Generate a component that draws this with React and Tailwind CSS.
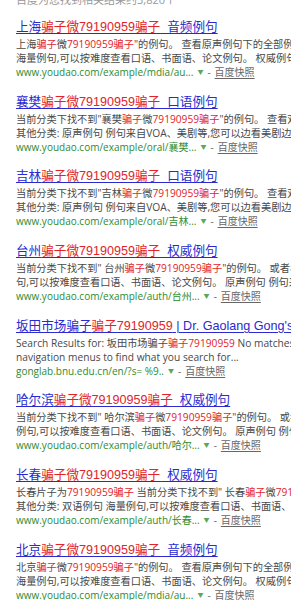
import React from "react";

const R = ({ children }) => <span className="text-[#e0242a]">{children}</span>;

const results = [
  {
    title: [["上海", 0], ["骗子微79190959骗子", 1], ["_音频例句", 0]],
    l1: [["上海", 0], ["骗子", 1], ["微", 0], ["79190959骗子", 1], ["\"的例句。 查看原声例句下的全部例句", 0]],
    l2: "海量例句,可以按难度查看口语、书面语、论文例句。 权威例句",
    url: "www.youdao.com/example/mdia/au...",
  },
  {
    title: [["襄樊", 0], ["骗子微79190959骗子", 1], ["_口语例句", 0]],
    l1: [["当前分类下找不到\"襄樊", 0], ["骗子", 1], ["微", 0], ["79190959骗子", 1], ["\"的例句。 查看双语例句", 0]],
    l2: "其他分类: 原声例句 例句来自VOA、美剧等,您可以边看美剧边学",
    url: "www.youdao.com/example/oral/襄樊...",
  },
  {
    title: [["吉林", 0], ["骗子微79190959骗子", 1], ["_口语例句", 0]],
    l1: [["当前分类下找不到\"吉林", 0], ["骗子", 1], ["微", 0], ["79190959骗子", 1], ["\"的例句。 查看双语例句", 0]],
    l2: "其他分类: 原声例句 例句来自VOA、美剧等,您可以边看美剧边学",
    url: "www.youdao.com/example/oral/吉林...",
  },
  {
    title: [["台州", 0], ["骗子微79190959骗子", 1], ["_权威例句", 0]],
    l1: [["当前分类下找不到\" 台州", 0], ["骗子", 1], ["微", 0], ["79190959骗子", 1], ["\"的例句。 或者看看", 0]],
    l2: "句,可以按难度查看口语、书面语、论文例句。 原声例句 例句来自",
    url: "www.youdao.com/example/auth/台州...",
  },
  {
    title: [["坂田市场骗子", 0], ["骗子79190959", 1], [" | Dr. Gaolang Gong's", 0]],
    l1: [["Search Results for: 坂田市场骗子", 0], ["骗子79190959", 1], [" No matches found", 0]],
    l2: "navigation menus to find what you search for...",
    url: "gonglab.bnu.edu.cn/en/?s= %9..",
  },
  {
    title: [["哈尔滨", 0], ["骗子微79190959骗子", 1], ["_权威例句", 0]],
    l1: [["当前分类下找不到\" 哈尔滨", 0], ["骗子", 1], ["微", 0], ["79190959骗子", 1], ["\"的例句。 或者看看", 0]],
    l2: "例句,可以按难度查看口语、书面语、论文例句。 原声例句 例句来自",
    url: "www.youdao.com/example/auth/哈尔...",
  },
  {
    title: [["长春", 0], ["骗子微79190959骗子", 1], ["_权威例句", 0]],
    l1: [["长春片子为", 0], ["79190959骗子", 1], [" 当前分类下找不到\" 长春", 0], ["骗子", 1], ["微", 0], ["79190959", 1]],
    l2: "其他分类: 双语例句 海量例句,可以按难度查看口语、书面语、论文",
    url: "www.youdao.com/example/auth/长春...",
  },
  {
    title: [["北京", 0], ["骗子微79190959骗子", 1], ["_音频例句", 0]],
    l1: [["北京", 0], ["骗子", 1], ["微", 0], ["79190959骗子", 1], ["\"的例句。 查看原声例句下的全部例句", 0]],
    l2: "海量例句,可以按难度查看口语、书面语、论文例句。 权威例句",
    url: "www.youdao.com/example/mdia/au...",
  },
];

function Result({ r }) {
  return (
    <div className="flex flex-col">
      <div
        className="h-[19px] leading-[19px] text-[12.6px] whitespace-nowrap overflow-hidden"
        style={{ fontFamily: '"Liberation Sans", "Noto Sans CJK SC", sans-serif' }}
      >
        <a className="underline decoration-1 underline-offset-[2px] text-[#2a2ad0]">
          {r.title.map(([t, red], i) =>
            red ? <R key={i}>{t}</R> : <span key={i}>{t}</span>
          )}
        </a>
      </div>
      <div className="h-[14px] leading-[14px] text-[10.2px] text-[#484848] whitespace-nowrap overflow-hidden">
        {r.l1.map(([t, red], i) => (red ? <R key={i}>{t}</R> : <span key={i}>{t}</span>))}
      </div>
      <div className="h-[14px] leading-[14px] text-[10.2px] text-[#484848] whitespace-nowrap overflow-hidden">
        {r.l2}
      </div>
      <div className="h-[14px] leading-[14px] text-[10px] whitespace-nowrap overflow-hidden flex items-center">
        <span className="text-[#2e8b2e]">{r.url}</span>
        <span className="text-[#5aa85a] text-[6px] ml-[4px]">▼</span>
        <span className="text-[#666] ml-[4px]">-</span>
        <span className="text-[#666] ml-[4px] underline underline-offset-[2px]">百度快照</span>
      </div>
    </div>
  );
}

export default function App() {
  return (
    <div
      className="w-[291px] h-[600px] overflow-hidden bg-white pl-[16px]"
      style={{ fontFamily: '"Open Sans", "Noto Sans CJK SC", sans-serif' }}
    >
      <div className="h-[18px] -mt-[9px] leading-[18px] text-[11px] text-[#999] whitespace-nowrap">
        百度为您找到相关结果约3,820个
      </div>
      <div className="flex flex-col gap-[13.7px] mt-[9px]">
        {results.map((r, i) => (
          <Result key={i} r={r} />
        ))}
      </div>
    </div>
  );
}
